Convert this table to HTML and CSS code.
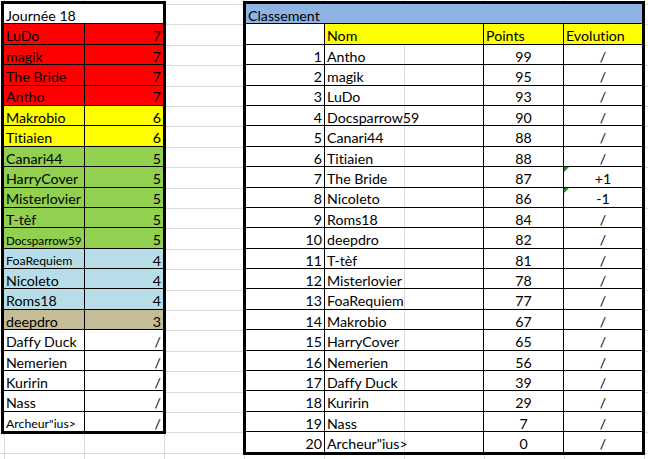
FILE: index.html
```html
<!DOCTYPE html>
<html lang="fr">
<head>
<meta charset="utf-8">
<title>Journée 18 - Classement</title>
<link rel="stylesheet" href="styles.css">
</head>
<body>
<div class="sheet">
  <div class="board day">
    <div class="cell title span2">Journée 18</div>
    <div class="cell red">LuDo</div><div class="cell red num">7</div>
    <div class="cell red">magik</div><div class="cell red num">7</div>
    <div class="cell red">The Bride</div><div class="cell red num">7</div>
    <div class="cell red">Antho</div><div class="cell red num">7</div>
    <div class="cell yellow">Makrobio</div><div class="cell yellow num">6</div>
    <div class="cell yellow">Titiaien</div><div class="cell yellow num">6</div>
    <div class="cell green">Canari44</div><div class="cell green num">5</div>
    <div class="cell green">HarryCover</div><div class="cell green num">5</div>
    <div class="cell green">Misterlovier</div><div class="cell green num">5</div>
    <div class="cell green">T-tèf</div><div class="cell green num">5</div>
    <div class="cell green tiny">Docsparrow59</div><div class="cell green num">5</div>
    <div class="cell blue small">FoaRequiem</div><div class="cell blue num">4</div>
    <div class="cell blue">Nicoleto</div><div class="cell blue num">4</div>
    <div class="cell blue">Roms18</div><div class="cell blue num">4</div>
    <div class="cell tan">deepdro</div><div class="cell tan num">3</div>
    <div class="cell">Daffy Duck</div><div class="cell num">/</div>
    <div class="cell">Nemerien</div><div class="cell num">/</div>
    <div class="cell">Kuririn</div><div class="cell num">/</div>
    <div class="cell">Nass</div><div class="cell num">/</div>
    <div class="cell small">Archeur"ius&gt;</div><div class="cell num">/</div>
  </div>

  <div class="board rank">
    <div class="cell head span4">Classement</div>
    <div class="cell"></div><div class="cell yellow">Nom</div><div class="cell yellow">Points</div><div class="cell yellow">Evolution</div>

    <div class="cell num">1</div><div class="cell name">Antho</div><div class="cell mid">99</div><div class="cell mid">/</div>
    <div class="cell num">2</div><div class="cell name">magik</div><div class="cell mid">95</div><div class="cell mid">/</div>
    <div class="cell num">3</div><div class="cell name">LuDo</div><div class="cell mid">93</div><div class="cell mid">/</div>
    <div class="cell num">4</div><div class="cell name">Docsparrow59</div><div class="cell mid">90</div><div class="cell mid">/</div>
    <div class="cell num">5</div><div class="cell name">Canari44</div><div class="cell mid">88</div><div class="cell mid">/</div>
    <div class="cell num">6</div><div class="cell name">Titiaien</div><div class="cell mid">88</div><div class="cell mid">/</div>
    <div class="cell num">7</div><div class="cell name">The Bride</div><div class="cell mid">87</div><div class="cell mid flag">+1</div>
    <div class="cell num">8</div><div class="cell name">Nicoleto</div><div class="cell mid">86</div><div class="cell mid flag">-1</div>
    <div class="cell num">9</div><div class="cell name">Roms18</div><div class="cell mid">84</div><div class="cell mid">/</div>
    <div class="cell num">10</div><div class="cell name">deepdro</div><div class="cell mid">82</div><div class="cell mid">/</div>
    <div class="cell num">11</div><div class="cell name">T-tèf</div><div class="cell mid">81</div><div class="cell mid">/</div>
    <div class="cell num">12</div><div class="cell name">Misterlovier</div><div class="cell mid">78</div><div class="cell mid">/</div>
    <div class="cell num">13</div><div class="cell name">FoaRequiem</div><div class="cell mid">77</div><div class="cell mid">/</div>
    <div class="cell num">14</div><div class="cell name">Makrobio</div><div class="cell mid">67</div><div class="cell mid">/</div>
    <div class="cell num">15</div><div class="cell name">HarryCover</div><div class="cell mid">65</div><div class="cell mid">/</div>
    <div class="cell num">16</div><div class="cell name">Nemerien</div><div class="cell mid">56</div><div class="cell mid">/</div>
    <div class="cell num">17</div><div class="cell name">Daffy Duck</div><div class="cell mid">39</div><div class="cell mid">/</div>
    <div class="cell num">18</div><div class="cell name">Kuririn</div><div class="cell mid">29</div><div class="cell mid">/</div>
    <div class="cell num">19</div><div class="cell name">Nass</div><div class="cell mid">7</div><div class="cell mid">/</div>
    <div class="cell num">20</div><div class="cell name">Archeur"ius&gt;</div><div class="cell mid">0</div><div class="cell mid">/</div>
  </div>
</div>
</body>
</html>
```

FILE: styles.css
```css
html, body {
  margin: 0;
  padding: 0;
}

body {
  width: 648px;
  height: 459px;
  overflow: hidden;
  background-color: #ffffff;
  background-image:
    repeating-linear-gradient(to right, #dadada 0 1px, transparent 1px 80px),
    repeating-linear-gradient(to bottom, #dadada 0 1px, transparent 1px 20.4px);
  background-position: 4px 4px, 0 4px;
  font-family: Lato, "Liberation Sans", sans-serif;
  font-size: 14.2px;
  font-variant-ligatures: none;
  color: #000;
}

.sheet {
  display: flex;
  align-items: flex-start;
  padding: 1px 0 0 1px;
}

.board {
  display: grid;
  gap: 1px;
  background: #000;
  border: 3px solid #000;
}

.day {
  grid-template-columns: 80px 78px;
  grid-template-rows: repeat(21, 19.4px);
}

.rank {
  margin-left: 77px;
  grid-template-columns: 78px 158px 79px 78px;
  grid-template-rows: repeat(22, 19.4px);
}

.cell {
  position: relative;
  display: flex;
  align-items: flex-end;
  padding: 0 2px 0 2px;
  background: #fff;
  line-height: 14.5px;
  white-space: nowrap;
  overflow: hidden;
}

.span2 { grid-column: span 2; }
.span4 { grid-column: span 4; }

.num { justify-content: flex-end; }
.mid { justify-content: center; }

.small { font-size: 12.3px; line-height: 14px; }
.tiny { font-size: 11.6px; line-height: 14px; padding-right: 0; }

.title { background: #fff; }
.head { background: #8db4e2; }
.red { background: #ff0000; }
.yellow { background: #ffff00; }
.green { background: #92d050; }
.blue { background: #b7dee8; }
.tan { background: #c4bd97; }

.name {
  background-color: #fff;
  background-image: linear-gradient(to right, transparent 79px, #dadada 79px 80px, transparent 80px);
}

.flag::before {
  content: "";
  position: absolute;
  left: 0;
  top: 0;
  border-top: 5px solid #1f8a1f;
  border-right: 5px solid transparent;
}
```
